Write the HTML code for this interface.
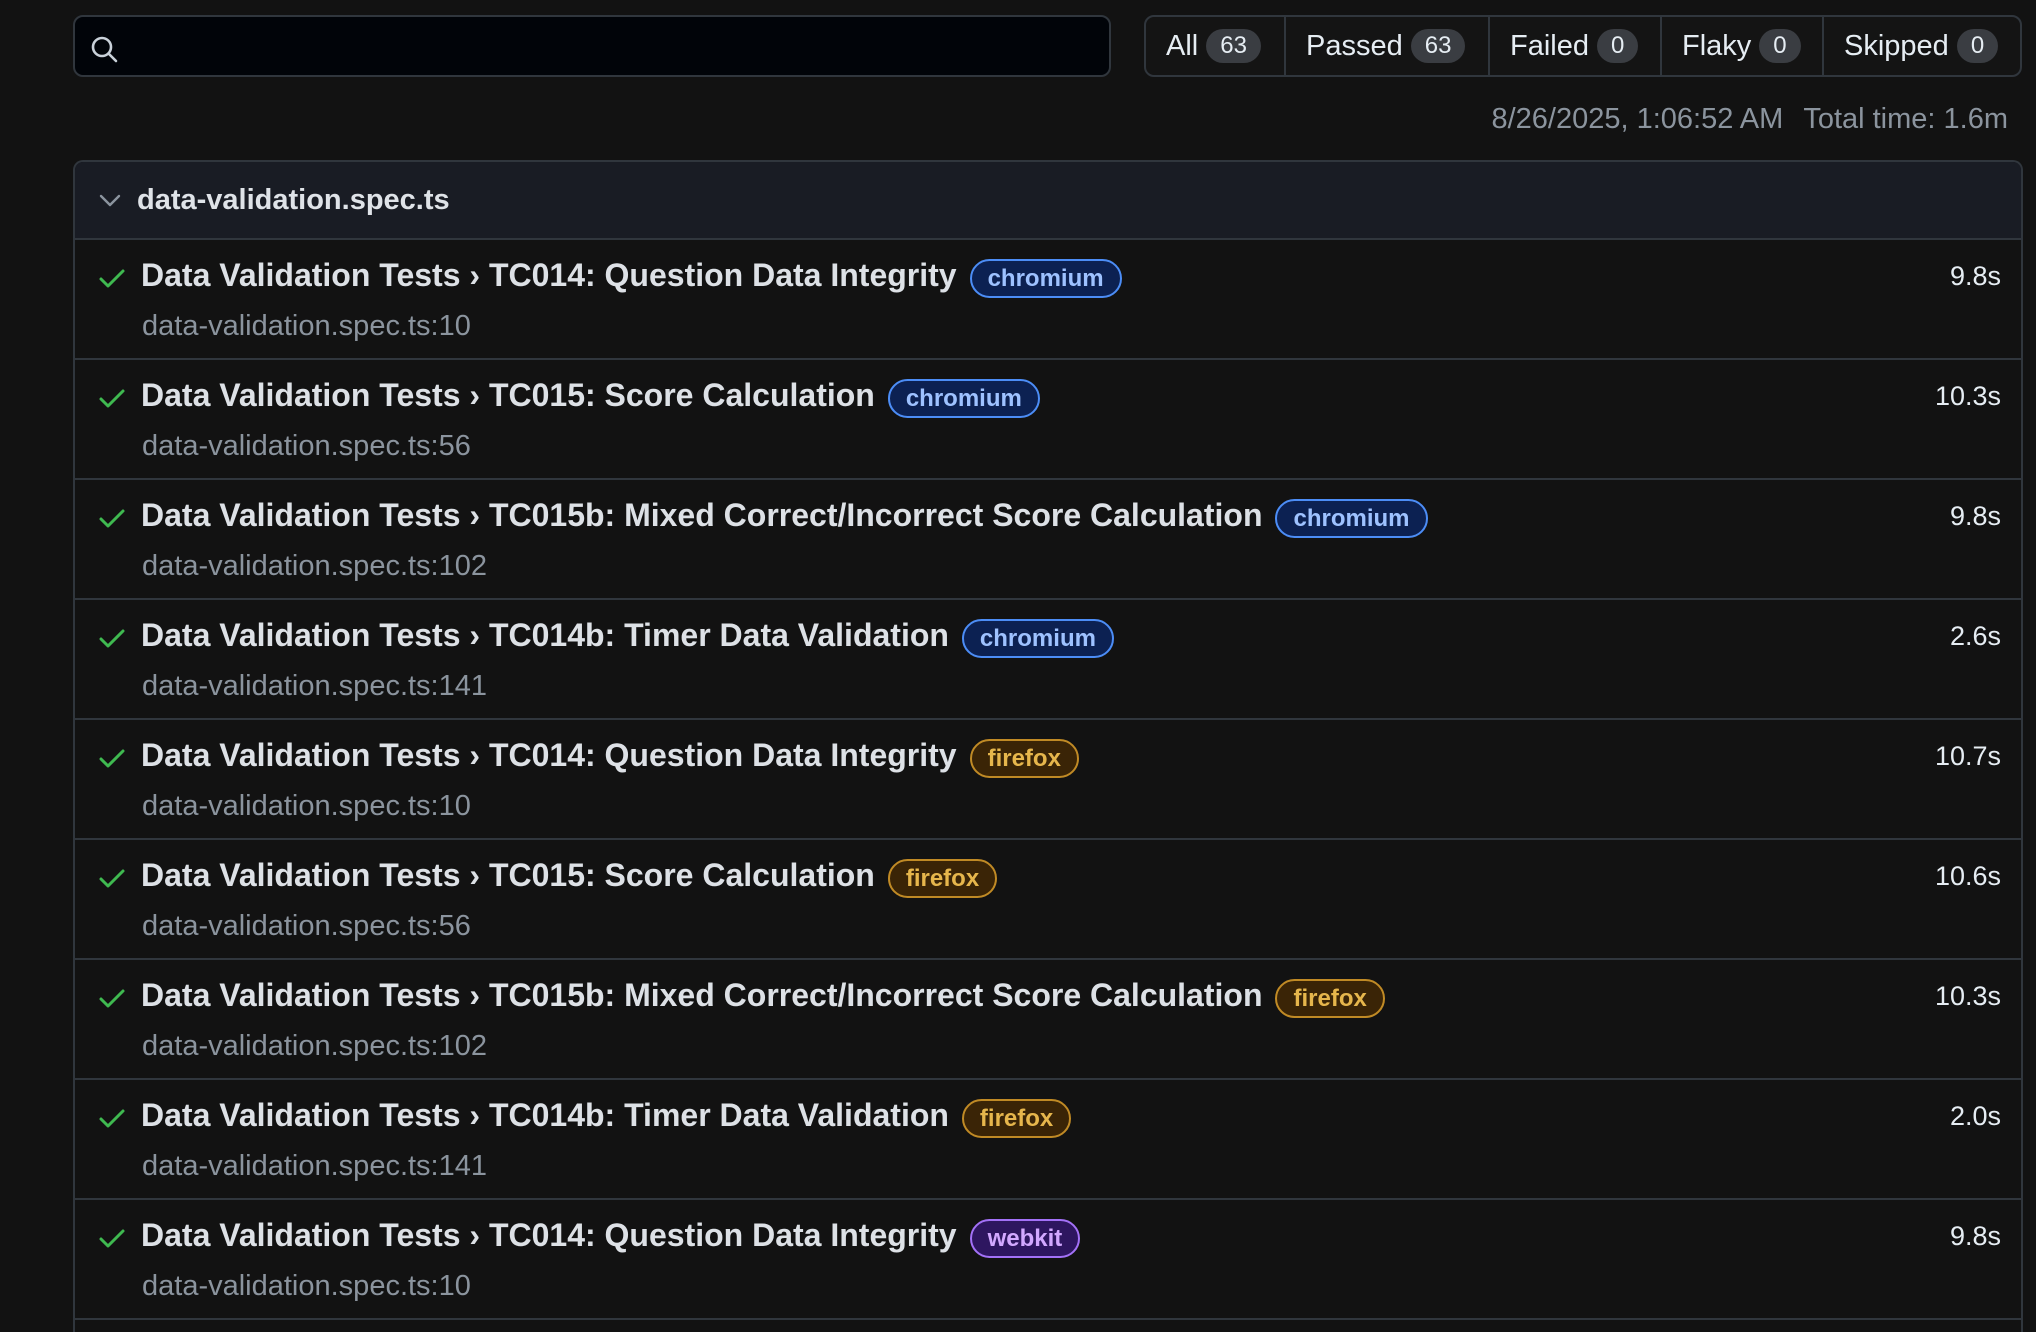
<!DOCTYPE html>
<html><head><meta charset="utf-8"><style>
*{box-sizing:border-box;margin:0;padding:0}
html,body{width:2036px;height:1332px;overflow:hidden}
body{background:#121212;font-family:"Liberation Sans",Arial,sans-serif;color:#e6edf3;position:relative}
.search{position:absolute;left:73px;top:15px;width:1038px;height:62px;background:#010409;border:2px solid #30363d;border-radius:10px}
.search svg{position:absolute;left:14px;top:16px}
.filters{position:absolute;left:1144px;top:15px;width:878px;height:62px;border:2px solid #30363d;border-radius:10px;display:flex;background:#141414}
.seg{display:flex;align-items:center;padding-left:20px;font-size:29px;border-right:2px solid #30363d;height:100%}
.seg:last-child{border-right:none}
.cnt{display:inline-block;background:#3a3d42;border-radius:17px;height:34px;line-height:34px;padding:0 14px;font-size:24px;margin-left:8px;color:#e6edf3}
.meta{position:absolute;right:28px;top:103px;font-size:29px;color:#8b949e}
.meta span{margin-left:20px}
.box{position:absolute;left:73px;top:160px;width:1950px;height:1172px;border:2px solid #30363d;border-bottom:none;border-radius:10px 10px 0 0;overflow:hidden}
.hdr{height:78px;background:#191c24;border-bottom:2px solid #30363d;display:flex;align-items:center;padding-left:24px;font-size:29px;font-weight:bold;color:#dfe3e8}
.hdr svg{margin-right:16px}
.row{height:120px;border-bottom:2px solid #30363d;position:relative}
.chk{position:absolute;left:23px;top:24px}
.t{position:absolute;left:66px;top:16px;font-size:32px;font-weight:bold;white-space:nowrap;display:flex;align-items:center;color:#dde1e6}
.s{position:absolute;left:67px;top:70px;font-size:29px;color:#8b949e}
.d{position:absolute;right:20px;top:21px;font-size:27px;color:#e6edf3}
.b{display:inline-block;height:39px;line-height:35px;border-radius:20px;border:2px solid;padding:0 16px;font-size:24px;margin-left:13px;font-weight:bold;position:relative;top:3px}
.cr{border-color:#4c8df6;background:#0c2152;color:#9ec2ff}
.ff{border-color:#c08a25;background:#3a2406;color:#e6b64c}
.wk{border-color:#a371f7;background:#2e1660;color:#d2a8ff}
</style></head><body>
<div class="search"><svg width="32" height="32" viewBox="0 0 32 32" fill="none" stroke="#c9d1d9" stroke-width="2.6" stroke-linecap="round"><circle cx="13" cy="14" r="9"/><path d="M20 21l7 7"/></svg></div>
<div class="filters">
<div class="seg" style="width:140px">All<span class="cnt">63</span></div>
<div class="seg" style="width:204px">Passed<span class="cnt">63</span></div>
<div class="seg" style="width:172px">Failed<span class="cnt">0</span></div>
<div class="seg" style="width:162px">Flaky<span class="cnt">0</span></div>
<div class="seg" style="width:196px">Skipped<span class="cnt">0</span></div>
</div>
<div class="meta">8/26/2025, 1:06:52 AM<span>Total time: 1.6m</span></div>
<div class="box">
<div class="hdr"><svg width="22" height="14" viewBox="0 0 22 14" fill="none" stroke="#8b949e" stroke-width="2.4" stroke-linecap="round" stroke-linejoin="round"><path d="M2 3l9 9 9-9"/></svg>data-validation.spec.ts</div>
<div class="row"><svg class="chk" width="28" height="28" viewBox="0 0 28 28" fill="none" stroke="#3fb950" stroke-width="3" stroke-linecap="round" stroke-linejoin="round"><path d="M3 15l7 7L25 7"/></svg><div class="t">Data Validation Tests › TC014: Question Data Integrity<span class="b cr">chromium</span></div><div class="s">data-validation.spec.ts:10</div><div class="d">9.8s</div></div>
<div class="row"><svg class="chk" width="28" height="28" viewBox="0 0 28 28" fill="none" stroke="#3fb950" stroke-width="3" stroke-linecap="round" stroke-linejoin="round"><path d="M3 15l7 7L25 7"/></svg><div class="t">Data Validation Tests › TC015: Score Calculation<span class="b cr">chromium</span></div><div class="s">data-validation.spec.ts:56</div><div class="d">10.3s</div></div>
<div class="row"><svg class="chk" width="28" height="28" viewBox="0 0 28 28" fill="none" stroke="#3fb950" stroke-width="3" stroke-linecap="round" stroke-linejoin="round"><path d="M3 15l7 7L25 7"/></svg><div class="t">Data Validation Tests › TC015b: Mixed Correct/Incorrect Score Calculation<span class="b cr">chromium</span></div><div class="s">data-validation.spec.ts:102</div><div class="d">9.8s</div></div>
<div class="row"><svg class="chk" width="28" height="28" viewBox="0 0 28 28" fill="none" stroke="#3fb950" stroke-width="3" stroke-linecap="round" stroke-linejoin="round"><path d="M3 15l7 7L25 7"/></svg><div class="t">Data Validation Tests › TC014b: Timer Data Validation<span class="b cr">chromium</span></div><div class="s">data-validation.spec.ts:141</div><div class="d">2.6s</div></div>
<div class="row"><svg class="chk" width="28" height="28" viewBox="0 0 28 28" fill="none" stroke="#3fb950" stroke-width="3" stroke-linecap="round" stroke-linejoin="round"><path d="M3 15l7 7L25 7"/></svg><div class="t">Data Validation Tests › TC014: Question Data Integrity<span class="b ff">firefox</span></div><div class="s">data-validation.spec.ts:10</div><div class="d">10.7s</div></div>
<div class="row"><svg class="chk" width="28" height="28" viewBox="0 0 28 28" fill="none" stroke="#3fb950" stroke-width="3" stroke-linecap="round" stroke-linejoin="round"><path d="M3 15l7 7L25 7"/></svg><div class="t">Data Validation Tests › TC015: Score Calculation<span class="b ff">firefox</span></div><div class="s">data-validation.spec.ts:56</div><div class="d">10.6s</div></div>
<div class="row"><svg class="chk" width="28" height="28" viewBox="0 0 28 28" fill="none" stroke="#3fb950" stroke-width="3" stroke-linecap="round" stroke-linejoin="round"><path d="M3 15l7 7L25 7"/></svg><div class="t">Data Validation Tests › TC015b: Mixed Correct/Incorrect Score Calculation<span class="b ff">firefox</span></div><div class="s">data-validation.spec.ts:102</div><div class="d">10.3s</div></div>
<div class="row"><svg class="chk" width="28" height="28" viewBox="0 0 28 28" fill="none" stroke="#3fb950" stroke-width="3" stroke-linecap="round" stroke-linejoin="round"><path d="M3 15l7 7L25 7"/></svg><div class="t">Data Validation Tests › TC014b: Timer Data Validation<span class="b ff">firefox</span></div><div class="s">data-validation.spec.ts:141</div><div class="d">2.0s</div></div>
<div class="row"><svg class="chk" width="28" height="28" viewBox="0 0 28 28" fill="none" stroke="#3fb950" stroke-width="3" stroke-linecap="round" stroke-linejoin="round"><path d="M3 15l7 7L25 7"/></svg><div class="t">Data Validation Tests › TC014: Question Data Integrity<span class="b wk">webkit</span></div><div class="s">data-validation.spec.ts:10</div><div class="d">9.8s</div></div>
</div>
</body></html>
